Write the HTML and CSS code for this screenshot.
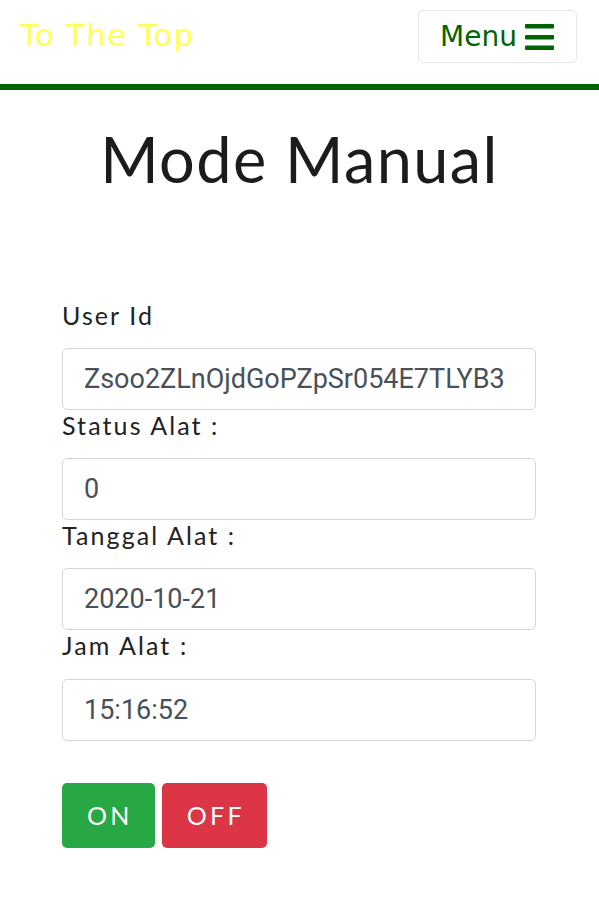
FILE: index.html
```html
<!DOCTYPE html>
<html lang="id">
<head>
<meta charset="utf-8">
<title>Mode Manual</title>
<link rel="stylesheet" href="styles.css">
</head>
<body>
<header class="topbar">
  <a class="brand" href="#">To The Top</a>
  <button class="menu-btn" type="button">
    <span class="menu-text">Menu</span>
    <svg class="menu-icon" width="29" height="26" viewBox="0 0 29 26" aria-hidden="true">
      <rect x="0" y="0" width="29" height="4.5" rx="1" fill="#006400"/>
      <rect x="0" y="11" width="29" height="4.5" rx="1" fill="#006400"/>
      <rect x="0" y="21.5" width="29" height="4.5" rx="1" fill="#006400"/>
    </svg>
  </button>
</header>
<main class="content">
  <h1 class="title">Mode Manual</h1>
  <form class="form">
    <div class="group">
      <label class="label">User Id</label>
      <input class="field" type="text" value="Zsoo2ZLnOjdGoPZpSr054E7TLYB3">
    </div>
    <div class="group">
      <label class="label">Status Alat :</label>
      <input class="field" type="text" value="0">
    </div>
    <div class="group">
      <label class="label">Tanggal Alat :</label>
      <input class="field" type="text" value="2020-10-21">
    </div>
    <div class="group">
      <label class="label">Jam Alat :</label>
      <input class="field" type="text" value="15:16:52">
    </div>
    <div class="actions">
      <button class="btn btn-on" type="button">ON</button>
      <button class="btn btn-off" type="button">OFF</button>
    </div>
  </form>
</main>
</body>
</html>
```
FILE: styles.css
```css
* { box-sizing: border-box; }
html, body { margin: 0; padding: 0; background: #fff; }
body { font-family: Lato, "Open Sans", sans-serif; color: #212529; }

.topbar {
  height: 90px;
  border-bottom: 6px solid #006400;
  display: flex;
  justify-content: space-between;
  align-items: flex-start;
  padding: 0 22px 0 20px;
}
.brand {
  font-family: "DejaVu Sans", Verdana, sans-serif;
  font-size: 31px;
  line-height: 31px;
  letter-spacing: 1.2px;
  color: #ffff5a;
  text-decoration: none;
  margin-top: 20px;
}
.menu-btn {
  margin-top: 10px;
  height: 53px;
  width: 159px;
  display: flex;
  align-items: center;
  padding: 0 0 0 21px;
  gap: 8px;
  background: #fff;
  border: 1px solid #e6e6e6;
  border-radius: 5px;
  font-family: "DejaVu Sans", Verdana, sans-serif;
  font-size: 28px;
  color: #006400;
}
.menu-text { line-height: 1; }
.menu-icon { display: block; margin-top: 1px; }

.content { padding: 0 62px; }
.title {
  margin: 31px 0 0;
  text-align: center;
  font-weight: 400;
  font-size: 63px;
  line-height: 1.2;
  letter-spacing: 1.4px;
  color: #1c1c1c;
}
.form {
  margin-top: 103px;
  width: 474px;
}
.group { display: flex; flex-direction: column; }
.label {
  font-size: 25px;
  line-height: 31px;
  letter-spacing: 2.1px;
  color: #222;
  margin-bottom: 17.3px;
}
.field {
  height: 62px;
  width: 100%;
  border: 1px solid #d3d7db;
  border-radius: 5px;
  padding: 0 21px;
  font-family: Roboto, "Liberation Sans", sans-serif;
  font-size: 27px;
  color: #495057;
  background: #fff;
}
.actions {
  margin-top: 42px;
  display: flex;
  gap: 7px;
}
.btn {
  height: 65px;
  padding: 0 22px 0 25px;
  border: none;
  border-radius: 5px;
  font-family: Lato, "Open Sans", sans-serif;
  font-size: 25px;
  letter-spacing: 3.3px;
  color: #fff;
}
.btn-on { background: #28a745; }
.btn-off { background: #dc3545; }
```
